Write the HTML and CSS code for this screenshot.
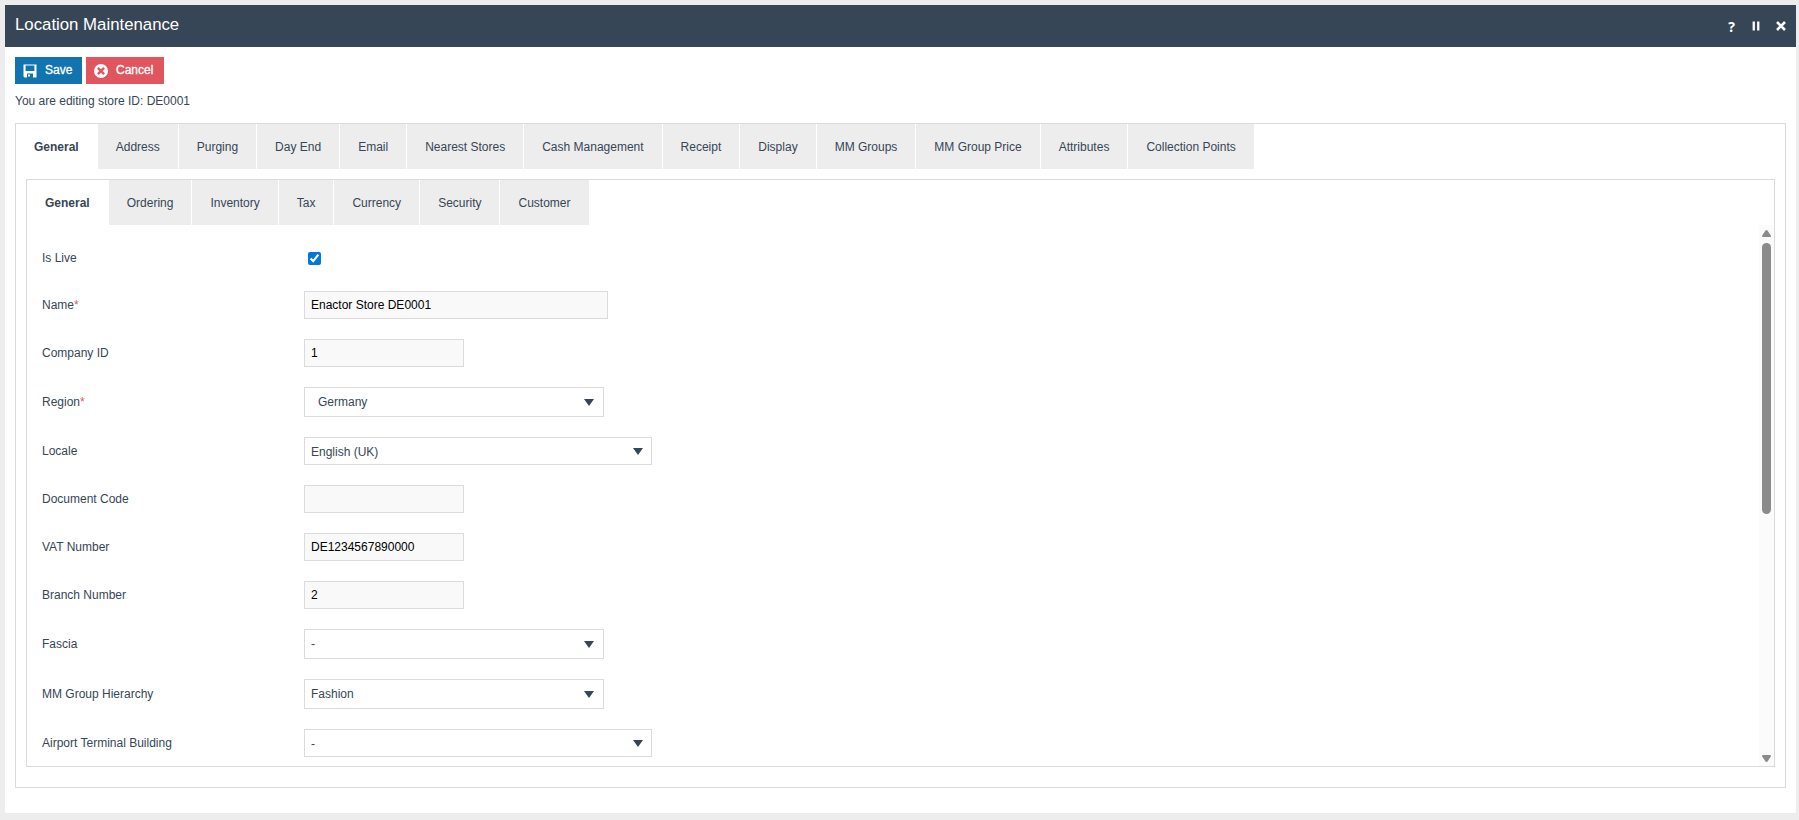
FILE: index.html
```html
<!DOCTYPE html>
<html lang="en">
<head>
    <meta charset="UTF-8">
    <meta name="viewport" content="width=device-width, initial-scale=1.0">
    <title>Location Maintenance</title>
    <link rel="stylesheet" href="styles.css">
</head>
<body>

<div class="window">
    <header class="title-bar">
        <h1>Location Maintenance</h1>
        <div class="title-icons">
            <span class="help">?</span>
            <svg class="pause" width="8" height="10" viewBox="0 0 8 10"><path d="M0.6 0.5h2.3v9H0.6zM5.1 0.5h2.3v9H5.1z"/></svg>
            <svg class="close" width="10" height="10" viewBox="0 0 10 10"><path d="M1 1l8 8M9 1l-8 8"/></svg>
        </div>
    </header>

    <main class="content">
        <div class="buttons">
            <button type="button" class="save">
                <svg width="14" height="14" viewBox="0 0 14 14">
                    <path fill="#fff" fill-rule="evenodd" d="M0.5 0.5h13v13h-12l-1-1zM2.6 1.5v5.5h8.8V1.5zM4 9.5v4h6v-4z"/>
                    <path fill="#fff" d="M5 10.5h2v2H5z"/>
                </svg>
                <span>Save</span>
            </button>
            <button type="button" class="cancel">
                <svg width="14" height="14" viewBox="0 0 14 14">
                    <circle cx="7" cy="7" r="7" fill="#fff"/>
                    <path stroke="#e0565f" stroke-width="2.4" d="M3.9 3.9l6.2 6.2M10.1 3.9l-6.2 6.2"/>
                </svg>
                <span>Cancel</span>
            </button>
        </div>
        <p class="message">You are editing store ID: DE0001</p>

        <div class="panel outer">
            <nav class="tabs">
                <a class="active">General</a>
                <a>Address</a>
                <a>Purging</a>
                <a>Day End</a>
                <a>Email</a>
                <a>Nearest Stores</a>
                <a>Cash Management</a>
                <a>Receipt</a>
                <a>Display</a>
                <a>MM Groups</a>
                <a>MM Group Price</a>
                <a>Attributes</a>
                <a>Collection Points</a>
            </nav>

            <div class="panel inner">
                <nav class="tabs">
                    <a class="active">General</a>
                    <a>Ordering</a>
                    <a>Inventory</a>
                    <a>Tax</a>
                    <a>Currency</a>
                    <a>Security</a>
                    <a>Customer</a>
                </nav>

                <div class="scroll-area">
                    <form class="details">
                        <div class="row live">
                            <label for="live">Is Live</label>
                            <input type="checkbox" id="live" checked>
                        </div>
                        <div class="row">
                            <label for="name">Name<span class="required">*</span></label>
                            <input type="text" id="name" class="wide" value="Enactor Store DE0001">
                        </div>
                        <div class="row">
                            <label for="company">Company ID</label>
                            <input type="text" id="company" value="1">
                        </div>
                        <div class="row">
                            <label>Region<span class="required">*</span></label>
                            <div class="select indent">Germany<svg class="arrow" width="10" height="7" viewBox="0 0 10 7"><path d="M0 0h10L5 7z"/></svg></div>
                        </div>
                        <div class="row">
                            <label>Locale</label>
                            <div class="select large">English (UK)<svg class="arrow" width="10" height="7" viewBox="0 0 10 7"><path d="M0 0h10L5 7z"/></svg></div>
                        </div>
                        <div class="row">
                            <label for="document">Document Code</label>
                            <input type="text" id="document">
                        </div>
                        <div class="row">
                            <label for="vat">VAT Number</label>
                            <input type="text" id="vat" value="DE1234567890000">
                        </div>
                        <div class="row">
                            <label for="branch">Branch Number</label>
                            <input type="text" id="branch" value="2">
                        </div>
                        <div class="row">
                            <label>Fascia</label>
                            <div class="select">-<svg class="arrow" width="10" height="7" viewBox="0 0 10 7"><path d="M0 0h10L5 7z"/></svg></div>
                        </div>
                        <div class="row">
                            <label>MM Group Hierarchy</label>
                            <div class="select">Fashion<svg class="arrow" width="10" height="7" viewBox="0 0 10 7"><path d="M0 0h10L5 7z"/></svg></div>
                        </div>
                        <div class="row">
                            <label>Airport Terminal Building</label>
                            <div class="select large">-<svg class="arrow" width="10" height="7" viewBox="0 0 10 7"><path d="M0 0h10L5 7z"/></svg></div>
                        </div>
                    </form>

                    <div class="scrollbar">
                        <svg width="9" height="7" viewBox="0 0 9 7"><path d="M3.5 0.6Q4.5 -0.4 5.5 0.6L8.8 5.5Q9.2 7 8 7H1Q-0.2 7 0.2 5.5z"/></svg>
                        <div class="thumb"></div>
                        <svg class="down" width="9" height="7" viewBox="0 0 9 7"><path d="M3.5 6.4Q4.5 7.4 5.5 6.4L8.8 1.5Q9.2 0 8 0H1Q-0.2 0 0.2 1.5z"/></svg>
                    </div>
                </div>
            </div>
        </div>
    </main>
</div>

</body>
</html>
```
FILE: styles.css
```css
* {
    box-sizing: border-box;
}

body {
    margin: 0;
    padding: 5px 3px 7px 5px;
    height: 820px;
    background-color: #ededed;
    font-family: "Liberation Sans", Arial, sans-serif;
    font-size: 12px;
    color: #364656;
}

.window {
    height: 808px;
    background-color: #fff;
}

/* Title bar */
.title-bar {
    display: flex;
    justify-content: space-between;
    align-items: center;
    height: 42px;
    padding: 0 10px;
    background-color: #364656;
    color: #fff;
}

.title-bar h1 {
    margin: 0 0 3px;
    font-size: 16.8px;
    font-weight: normal;
}

.title-icons {
    display: flex;
    align-items: center;
}

.title-icons .help {
    font: bold 14px "Noto Sans", sans-serif;
}

.title-icons .pause {
    margin-left: 17px;
    fill: #fff;
}

.title-icons .close {
    margin-left: 16px;
    stroke: #fff;
    stroke-width: 2.6;
}

/* Toolbar */
.content {
    padding: 10px;
}

.buttons {
    display: flex;
    gap: 4px;
}

.buttons button {
    display: flex;
    align-items: center;
    gap: 8px;
    height: 27px;
    padding: 0 0 0 8px;
    border: none;
    color: #fff;
    font: 12px "Liberation Sans", Arial, sans-serif;
    -webkit-text-stroke: 0.3px #fff;
}

.buttons span {
    padding-bottom: 1px;
}

.buttons .save {
    width: 67px;
    background-color: #1174af;
}

.buttons .cancel {
    width: 78px;
    background-color: #e0565f;
}

.message {
    margin: 10px 0 15px;
    line-height: 14px;
}

/* Tabs */
.panel {
    border: 1px solid #dbdbdb;
}

.outer {
    height: 665px;
}

.inner {
    height: 588px;
    margin: 10px 10px 0;
}

.tabs {
    display: flex;
    height: 45px;
}

.tabs a {
    padding: 1px 18px 0;
    border-right: 1px solid #fff;
    background-color: #ededed;
    line-height: 44px;
    white-space: nowrap;
}

.tabs .active {
    background-color: #fff;
    font-weight: bold;
}

/* Form */
.scroll-area {
    display: flex;
    height: 541px;
    overflow: hidden;
}

.details {
    flex: 1;
    padding: 10px 0 0 15px;
}

.row {
    display: flex;
    align-items: center;
    padding: 10px 0;
}

.row label {
    width: 262px;
}

.required {
    color: #e0565f;
}

.row.live {
    height: 46px;
}

.row input[type="checkbox"] {
    width: 13px;
    height: 13px;
    margin: 0 4px;
    accent-color: #0078d7;
}

.row input[type="text"] {
    width: 160px;
    height: 28px;
    padding: 0 6px;
    border: 1px solid #dbdbdb;
    background-color: #f9f9f9;
    color: #000;
    font: inherit;
}

.row input.wide {
    width: 304px;
}

.select {
    display: flex;
    align-items: center;
    justify-content: space-between;
    width: 300px;
    height: 30px;
    padding: 0 9px 0 6px;
    border: 1px solid #dbdbdb;
}

.select.indent {
    padding-left: 13px;
}

.select.large {
    width: 348px;
    height: 28px;
    padding: 1px 8px 0 6px;
}

.arrow {
    fill: #364656;
}

/* Scrollbar */
.scrollbar {
    display: flex;
    flex-direction: column;
    align-items: center;
    width: 15px;
    padding: 5px 0 4px;
    background-color: #fbfbfb;
}

.scrollbar svg {
    fill: #8b8b8b;
}

.thumb {
    width: 9px;
    height: 271px;
    margin-top: 6px;
    border-radius: 5px;
    background-color: #8b8b8b;
}

.scrollbar .down {
    margin-top: auto;
}
```
